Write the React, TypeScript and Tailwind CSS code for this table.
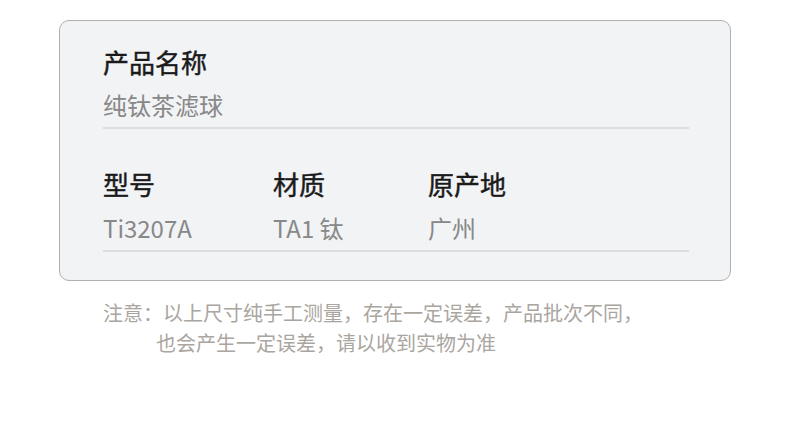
import React from 'react';

const specs = [
  { label: '型号', value: 'Ti3207A', width: 'w-[170px]' },
  { label: '材质', value: 'TA1 钛', width: 'w-[155px]' },
  { label: '原产地', value: '广州', width: 'flex-1' },
];

export default function App() {
  return (
    <div
      className="w-[790px] h-[428px] bg-white overflow-hidden"
      style={{ fontFamily: '"Noto Sans CJK SC", "Noto Sans", sans-serif' }}
    >
      <div className="ml-[59px] mt-[20px] w-[672px] rounded-[10px] border border-[#b0b0b0] bg-[#f2f3f5] pl-[43px] pr-[41px] pt-[21px] pb-[28px]">
        <div className="text-[26px] leading-[40px] font-normal text-[#1a1a1a] [-webkit-text-stroke:0.45px_#1a1a1a]">产品名称</div>
        <div className="mt-[3px] text-[24px] leading-[40px] text-[#888888]">纯钛茶滤球</div>
        <div className="mt-[2px] h-[2px] bg-[#dcdddf]" />

        <div className="mt-[35px] flex">
          {specs.map((s) => (
            <div key={s.label} className={s.width}>
              <div className="text-[26px] leading-[40px] font-normal text-[#1a1a1a] [-webkit-text-stroke:0.45px_#1a1a1a]">{s.label}</div>
              <div className="mt-[4px] text-[24px] leading-[40px] text-[#888888]">{s.value}</div>
            </div>
          ))}
        </div>
        <div className="mt-[2px] h-[2px] bg-[#dcdddf]" />
      </div>

      <div className="ml-[103px] mt-[17px] text-[20px] leading-[30px] text-[#aaa69f]">
        <div>注意：以上尺寸纯手工测量，存在一定误差，产品批次不同，</div>
        <div className="pl-[53px]">也会产生一定误差，请以收到实物为准</div>
      </div>
    </div>
  );
}
